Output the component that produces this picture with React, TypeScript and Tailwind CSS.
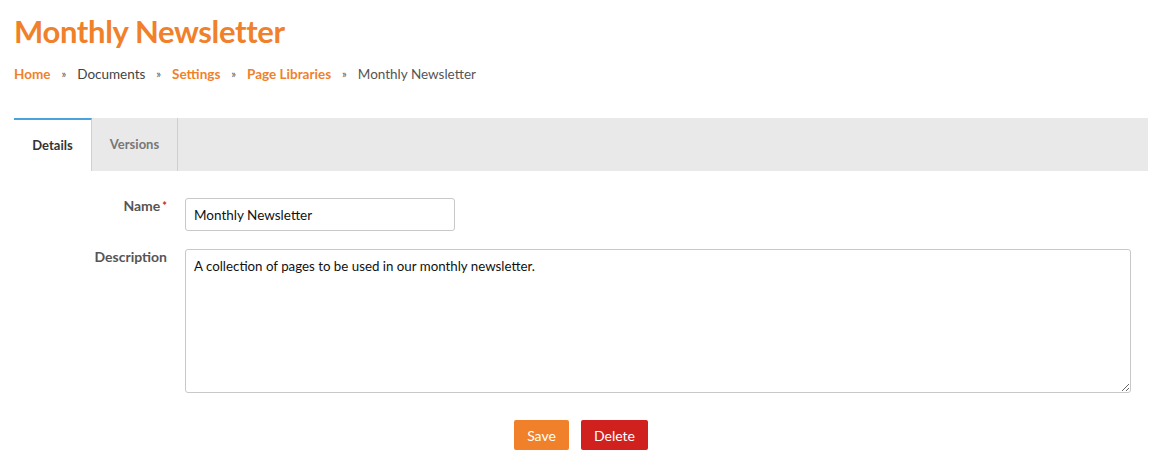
import React from "react";

export default function App() {
  return (
    <div className="w-[1160px] h-[469px] bg-white px-[14px] pt-[11px] text-[14px] text-[#444]" style={{ fontFamily: "Lato, 'Noto Sans', sans-serif" }}>
      <h1 className="text-[31px] font-bold leading-[40px] text-[#f0812a] tracking-[-0.35px]">Monthly Newsletter</h1>
      <div className="mt-[13px] flex items-center text-[13.5px] leading-[20px]">
        <span className="font-bold text-[#f0812a]">Home</span>
        <span className="mx-[11px] text-[#555] text-[11px]">»</span>
        <span className="text-[#444]">Documents</span>
        <span className="mx-[11px] text-[#555] text-[11px]">»</span>
        <span className="font-bold text-[#f0812a]">Settings</span>
        <span className="mx-[11px] text-[#555] text-[11px]">»</span>
        <span className="font-bold text-[#f0812a]">Page Libraries</span>
        <span className="mx-[11px] text-[#555] text-[11px]">»</span>
        <span className="text-[#555]">Monthly Newsletter</span>
      </div>
      <div className="mt-[34px] w-[1134px] h-[53px] bg-[#e9e9e9] flex">
        <div className="w-[78px] h-full bg-white border-t-2 border-[#4aa3df] flex items-center justify-center font-bold text-[13px] text-[#333] border-r border-r-[#d0d0d0]">Details</div>
        <div className="w-[86px] h-full border-r border-[#cfcfcf] flex items-center justify-center font-bold text-[13px] text-[#777]">Versions</div>
      </div>
      <div className="mt-[27px] flex flex-col gap-[18px]">
        <div className="flex">
          <div className="w-[153px] text-right font-bold text-[14px] leading-[16px] text-[#555]">
            Name<span className="text-[#d0211c] ml-[2px] text-[11px] align-top">*</span>
          </div>
          <input
            className="ml-[18px] w-[270px] h-[33px] border border-[#c8c8c8] rounded-[3px] px-[8px] text-[13.5px] text-[#111] outline-none"
            defaultValue="Monthly Newsletter"
            style={{ fontFamily: "Lato, 'Noto Sans', sans-serif" }}
          />
        </div>
        <div className="flex">
          <div className="w-[153px] text-right font-bold text-[14px] leading-[16px] text-[#555]">Description</div>
          <textarea
            className="ml-[18px] w-[946px] h-[144px] border border-[#c8c8c8] rounded-[3px] px-[8px] py-[7px] text-[13.3px] text-[#111] outline-none"
            defaultValue="A collection of pages to be used in our monthly newsletter."
            style={{ fontFamily: "Lato, 'Noto Sans', sans-serif" }}
          />
        </div>
      </div>
      <div className="mt-[27px] flex justify-center gap-[12px] w-[1134px]">
        <button className="w-[55px] h-[30px] bg-[#f0812a] text-white rounded-[2px] text-[14px]">Save</button>
        <button className="w-[67px] h-[30px] bg-[#d0211f] text-white rounded-[2px] text-[14px]">Delete</button>
      </div>
    </div>
  );
}
